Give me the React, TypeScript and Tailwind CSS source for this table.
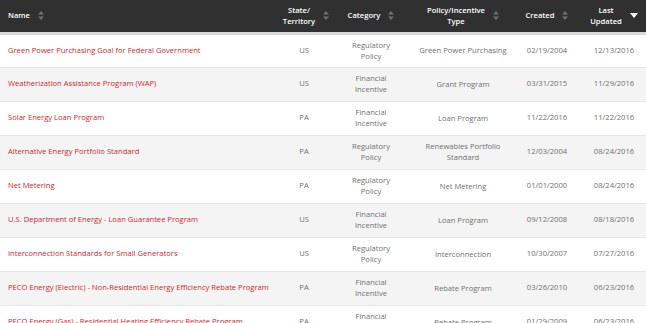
type Row = {
  name: string;
  state: string;
  category: [string, string];
  type: string[];
  created: string;
  updated: string;
};

const rows: Row[] = [
  { name: 'Green Power Purchasing Goal for Federal Government', state: 'US', category: ['Regulatory', 'Policy'], type: ['Green Power Purchasing'], created: '02/19/2004', updated: '12/13/2016' },
  { name: 'Weatherization Assistance Program (WAP)', state: 'US', category: ['Financial', 'Incentive'], type: ['Grant Program'], created: '03/31/2015', updated: '11/29/2016' },
  { name: 'Solar Energy Loan Program', state: 'PA', category: ['Financial', 'Incentive'], type: ['Loan Program'], created: '11/22/2016', updated: '11/22/2016' },
  { name: 'Alternative Energy Portfolio Standard', state: 'PA', category: ['Regulatory', 'Policy'], type: ['Renewables Portfolio', 'Standard'], created: '12/03/2004', updated: '08/24/2016' },
  { name: 'Net Metering', state: 'PA', category: ['Regulatory', 'Policy'], type: ['Net Metering'], created: '01/01/2000', updated: '08/24/2016' },
  { name: 'U.S. Department of Energy - Loan Guarantee Program', state: 'US', category: ['Financial', 'Incentive'], type: ['Loan Program'], created: '09/12/2008', updated: '08/18/2016' },
  { name: 'Interconnection Standards for Small Generators', state: 'US', category: ['Regulatory', 'Policy'], type: ['Interconnection'], created: '10/30/2007', updated: '07/27/2016' },
  { name: 'PECO Energy (Electric) - Non-Residential Energy Efficiency Rebate Program', state: 'PA', category: ['Financial', 'Incentive'], type: ['Rebate Program'], created: '03/26/2010', updated: '06/23/2016' },
  { name: 'PECO Energy (Gas) - Residential Heating Efficiency Rebate Program', state: 'PA', category: ['Financial', 'Incentive'], type: ['Rebate Program'], created: '01/29/2009', updated: '06/23/2016' },
];

function SortIcon({ active }: { active?: boolean }) {
  if (active) {
    return (
      <svg width="8" height="5" viewBox="0 0 8 5" className="shrink-0">
        <path d="M0 0h8L4 5z" fill="#ffffff" />
      </svg>
    );
  }
  return (
    <svg width="6" height="9" viewBox="0 0 6 9" className="shrink-0">
      <path d="M3 0L6 3.5H0z" fill="#707070" />
      <path d="M3 9L6 5.5H0z" fill="#707070" />
    </svg>
  );
}

function Head({ lines, active, left }: { lines: string[]; active?: boolean; left?: boolean }) {
  return (
    <th className={`px-2 font-semibold ${left ? 'text-left' : 'text-center'}`}>
      <div className={`flex items-center gap-[8px] ${left ? 'justify-start' : 'justify-center'}`}>
        <span className="leading-[11px]">
          {lines.map((l) => (
            <span key={l} className="block">
              {l}
            </span>
          ))}
        </span>
        <SortIcon active={active} />
      </div>
    </th>
  );
}

export default function App() {
  return (
    <div className="h-[323px] w-[646px] overflow-hidden bg-white font-['Open_Sans',sans-serif] text-[7.6px]">
      <table className="w-full table-fixed border-collapse">
        <colgroup>
          <col className="w-[280px]" />
          <col className="w-[48px]" />
          <col className="w-[86px]" />
          <col className="w-[98px]" />
          <col className="w-[70px]" />
          <col className="w-[64px]" />
        </colgroup>
        <thead>
          <tr className="h-[33px] border-b-[3px] border-[#d9d9d9] bg-[#303030] text-white">
            <Head lines={['Name']} left />
            <th className="px-0 font-semibold">
              <div className="flex items-center justify-center gap-[8px] pl-1">
                <span className="leading-[11px]">
                  <span className="block">State/</span>
                  <span className="block">Territory</span>
                </span>
                <SortIcon />
              </div>
            </th>
            <Head lines={['Category']} />
            <Head lines={['Policy/Incentive', 'Type']} />
            <Head lines={['Created']} />
            <Head lines={['Last', 'Updated']} active />
          </tr>
        </thead>
        <tbody>
          {rows.map((r, i) => (
            <tr
              key={r.name}
              className={`h-[34px] border-b border-[#e6e6e6] text-[#707070] ${i % 2 === 1 ? 'bg-[#f4f4f4]' : 'bg-white'}`}
            >
              <td className="truncate px-2 text-left text-[#d1262c]">{r.name}</td>
              <td className="text-center">{r.state}</td>
              <td className="text-center leading-[11px]">
                <span className="block">{r.category[0]}</span>
                <span className="block">{r.category[1]}</span>
              </td>
              <td className="text-center leading-[11px]">
                {r.type.map((t) => (
                  <span key={t} className="block">
                    {t}
                  </span>
                ))}
              </td>
              <td className="text-center">{r.created}</td>
              <td className="text-center">{r.updated}</td>
            </tr>
          ))}
        </tbody>
      </table>
    </div>
  );
}
